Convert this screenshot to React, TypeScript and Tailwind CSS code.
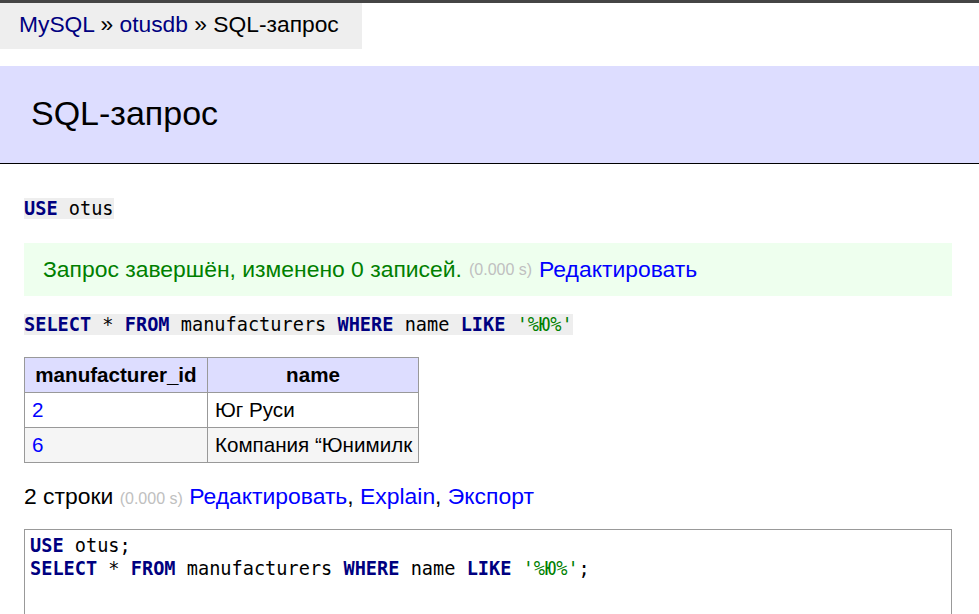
export default function App() {
  // jush-like highlighting pieces
  const kw = "font-bold text-[#000080]";
  const str = "text-[#008000]";

  return (
    <div className="min-h-screen bg-white font-['Liberation_Sans',Arial,sans-serif] text-black">
      {/* top dark strip */}
      <div className="h-[3px] bg-[#454545]" />

      {/* breadcrumb */}
      <div className="w-[362px] h-[46px] bg-[#eee] pl-[19px] text-[22.8px] leading-[42px] whitespace-nowrap">
        <a className="text-[#000080]">MySQL</a> » <a className="text-[#000080]">otusdb</a> » SQL-запрос
      </div>

      {/* page title */}
      <h2 className="mt-[17px] bg-[#ddf] border-b border-black pl-[31px] pt-[28px] pb-[30px] text-[34px] leading-[39px] font-normal">
        SQL-запрос
      </h2>

      <div className="px-[24px]">
        {/* USE statement */}
        <div className="mt-[34px] leading-[22px]">
          <code className="bg-[#eee] font-['DejaVu_Sans_Mono',monospace] text-[18.6px]">
            <span className={kw}>USE</span> otus
          </code>
        </div>

        {/* success message */}
        <div className="mt-[22px] w-[928px] h-[53px] bg-[#efe] flex items-center pl-[19px] text-[22.9px] whitespace-nowrap">
          <span className="text-[#008000]">Запрос завершён, изменено 0 записей.</span>
          <span className="text-[#c0c0c0] text-[16px] ml-[7px]">(0.000 s)</span>
          <a className="text-[#00f] ml-[7px]">Редактировать</a>
        </div>

        {/* SELECT statement */}
        <div className="mt-[18px] leading-[22px]">
          <code className="bg-[#eee] font-['DejaVu_Sans_Mono',monospace] text-[18.6px] whitespace-pre">
            <span className={kw}>SELECT</span> * <span className={kw}>FROM</span> manufacturers{" "}
            <span className={kw}>WHERE</span> name <span className={kw}>LIKE</span>{" "}
            <span className={str}>'%Ю%'</span>
          </code>
        </div>

        {/* result table */}
        <table className="mt-[20px] w-[394px] border-collapse text-[20.6px] table-fixed">
          <thead>
            <tr className="bg-[#ddf] h-[35px]">
              <th className="w-[183px] border border-[#999] px-[6px] font-bold text-center">manufacturer_id</th>
              <th className="w-[211px] border border-[#999] px-[6px] font-bold text-center">name</th>
            </tr>
          </thead>
          <tbody>
            <tr className="h-[35px]">
              <td className="border border-[#999] px-[7px]">
                <a className="text-[#00f]">2</a>
              </td>
              <td className="border border-[#999] px-[7px] whitespace-nowrap overflow-hidden">Юг Руси</td>
            </tr>
            <tr className="h-[35px] bg-[#f5f5f5]">
              <td className="border border-[#999] px-[7px]">
                <a className="text-[#00f]">6</a>
              </td>
              <td className="border border-[#999] px-[7px] whitespace-nowrap overflow-hidden">Компания “Юнимилк</td>
            </tr>
          </tbody>
        </table>

        {/* summary line */}
        <div className="mt-[19px] text-[22.9px] leading-[28px] whitespace-nowrap">
          2 строки <span className="text-[#c0c0c0] text-[16px]">(0.000 s)</span>{" "}
          <a className="text-[#00f]">Редактировать</a>, <a className="text-[#00f]">Explain</a>,{" "}
          <a className="text-[#00f]">Экспорт</a>
        </div>

        {/* query editor */}
        <div className="mt-[16px] w-[928px] h-[150px] border border-[#999] pl-[5px] pt-[4px] font-['DejaVu_Sans_Mono',monospace] text-[18.6px] leading-[23px] whitespace-pre">
          <div>
            <span className={kw}>USE</span> otus;
          </div>
          <div>
            <span className={kw}>SELECT</span> * <span className={kw}>FROM</span> manufacturers{" "}
            <span className={kw}>WHERE</span> name <span className={kw}>LIKE</span>{" "}
            <span className={str}>'%Ю%'</span>;
          </div>
        </div>
      </div>
    </div>
  );
}
